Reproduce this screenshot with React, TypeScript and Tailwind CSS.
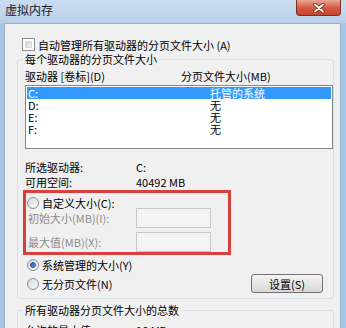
import React from 'react'

function Checkbox() {
  return (
    <span className="block w-[13px] h-[13px] shrink-0 border border-[#8e8f8f] bg-white p-[2px]">
      <span className="block w-full h-full bg-gradient-to-br from-[#cbcfd5] to-[#f6f6f6] border border-[#d3d6db]" />
    </span>
  )
}

function Radio({ checked = false, disabled = false }: { checked?: boolean; disabled?: boolean }) {
  return (
    <span
      className={`flex items-center justify-center w-[12px] h-[12px] shrink-0 rounded-full border ${
        disabled ? 'border-[#b4b4b4]' : 'border-[#8e8f8f]'
      } bg-gradient-to-br from-[#d6d9dd] to-[#fbfbfb]`}
    >
      {checked && (
        <span className="block w-[6px] h-[6px] rounded-full bg-gradient-to-br from-[#1c5ea8] to-[#5aa2e6] border border-[#1a4f8f]" />
      )}
    </span>
  )
}

const drives = [
  { name: 'C:', size: '托管的系统', selected: true },
  { name: 'D:', size: '无' },
  { name: 'E:', size: '无' },
  { name: 'F:', size: '无' },
]

export default function App() {
  return (
    <div className="w-[346px] h-[328px] overflow-hidden flex flex-col bg-[#a9c5e5] font-['Noto_Sans_CJK_SC',sans-serif] text-[11px] leading-[12px] text-black">
      {/* Title bar */}
      <div className="h-[23px] shrink-0 flex items-start justify-between bg-gradient-to-b from-[#cadcf0] to-[#bad0e9]">
        <span className="pl-[5px] pt-[3px] text-[12px] leading-[14px] text-[#1b1b1b]">虚拟内存</span>
        <div className="mr-[5px] w-[45px] h-[16px] rounded-b-[4px] border border-t-0 border-[#7b2f22] bg-gradient-to-b from-[#eaa697] via-[#d35c44] to-[#c9452d] flex items-center justify-center">
          <svg width="12" height="10" viewBox="0 0 12 10">
            <path d="M2 1.5 L10 8.5 M10 1.5 L2 8.5" stroke="#5a2018" strokeWidth="3.4" strokeLinecap="round" />
            <path d="M2 1.5 L10 8.5 M10 1.5 L2 8.5" stroke="#ffffff" strokeWidth="2" strokeLinecap="round" />
          </svg>
        </div>
      </div>

      {/* Client area */}
      <div className="ml-[4px] w-[337px] flex-1 bg-[#f0f0f0] border border-[#97afca] rounded-t-[2px]">
        <div className="mt-[14px] pl-[17px] h-[13px] flex items-center gap-[3px]">
          <Checkbox />
          <span>自动管理所有驱动器的分页文件大小 (A)</span>
        </div>

        <fieldset className="mt-[1px] ml-[12px] w-[317px] border border-[#d5dfe5] rounded-[3px] pb-[5px]">
          <legend className="ml-[5px] px-[2px] leading-[14px]">每个驱动器的分页文件大小</legend>

          <div className="mt-[4px] h-[12px] pl-[7px] flex">
            <span className="w-[156px]">驱动器 [卷标](D)</span>
            <span>分页文件大小(MB)</span>
          </div>

          <div className="mt-[3px] ml-[7px] w-[308px] h-[64px] border border-[#828790] bg-white p-[1px]">
            {drives.map((d) => (
              <div
                key={d.name}
                className={`h-[12px] flex pl-[1px] ${d.selected ? 'bg-[#3399ff] text-white' : ''}`}
              >
                <span className="w-[182px]">{d.name}</span>
                <span>{d.size}</span>
              </div>
            ))}
          </div>

          <div className="mt-[12px] h-[12px] pl-[7px] flex">
            <span className="w-[111px]">所选驱动器:</span>
            <span>C:</span>
          </div>
          <div className="mt-[3px] h-[12px] pl-[7px] flex">
            <span className="w-[111px]">可用空间:</span>
            <span>40492 MB</span>
          </div>

          {/* Highlighted custom size section */}
          <div className="mt-[2px] ml-[5px] w-[208px] border-[3px] border-[#d8403d]">
            <div className="mt-[4px] h-[12px] pl-[1px] flex items-center gap-[3px]">
              <Radio />
              <span>自定义大小(C):</span>
            </div>
            <div className="-mt-[1px] h-[20px] flex items-center">
              <span className="w-[110px] pl-[2px] text-[#8d8d8d]">初始大小(MB)(I):</span>
              <span className="block w-[75px] h-[20px] border border-[#c3c7cb] bg-[#f3f3f3]" />
            </div>
            <div className="mt-[4px] h-[20px] flex items-center">
              <span className="w-[110px] pl-[2px] text-[#8d8d8d]">最大值(MB)(X):</span>
              <span className="block w-[75px] h-[20px] border border-[#c3c7cb] bg-[#f3f3f3]" />
            </div>
          </div>

          <div className="mt-[4px] h-[12px] pl-[9px] flex items-center gap-[3px]">
            <Radio checked />
            <span>系统管理的大小(Y)</span>
          </div>
          <div className="mt-[3px] h-[19px] pl-[9px] pr-[10px] flex items-center justify-between">
            <div className="flex items-center gap-[3px]">
              <Radio />
              <span>无分页文件(N)</span>
            </div>
            <button
              type="button"
              className="w-[72px] h-[19px] rounded-[3px] border border-[#707070] bg-gradient-to-b from-[#f3f3f3] via-[#e6e6e6] to-[#d9d9d9] text-[11px] leading-[12px]"
            >
              设置(S)
            </button>
          </div>
        </fieldset>

        <fieldset className="mt-[4px] ml-[12px] w-[317px] border border-[#d5dfe5] rounded-[3px]">
          <legend className="ml-[5px] px-[2px] leading-[14px]">所有驱动器分页文件大小的总数</legend>
          <div className="mt-[7px] h-[12px] pl-[7px] flex">
            <span className="w-[111px]">允许的最小值:</span>
            <span>16 MB</span>
          </div>
        </fieldset>
      </div>
    </div>
  )
}
